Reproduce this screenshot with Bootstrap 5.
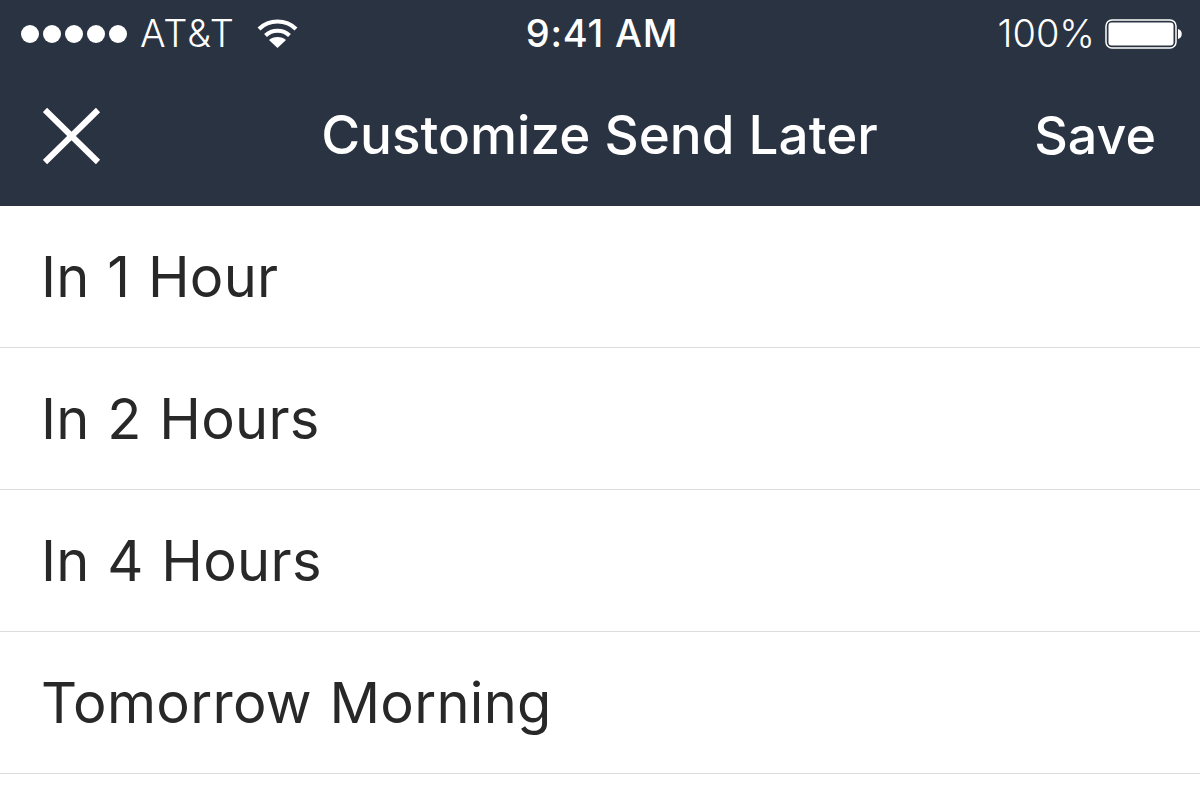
<!doctype html>
<html lang="en"><head><meta charset="utf-8">
<link href="https://cdn.jsdelivr.net/npm/bootstrap@5.3.0/dist/css/bootstrap.min.css" rel="stylesheet">
<style>
html,body{margin:0;height:800px;overflow:hidden;background:#fff}
.phone-top{background:#2a3342;color:#fff;height:206px;font-family:Inter,sans-serif}
.status-bar{height:67px;padding:0 17px 0 21px;font-family:Inter,sans-serif;font-weight:300;font-size:38px}
.status-side{width:320px}
.carrier-text{letter-spacing:1px;margin-left:13px}
.clock-text{font-weight:500;font-size:38px;letter-spacing:.8px}
.signal-dot{width:18px;height:18px;border-radius:50%;background:#fff;display:block}
.signal-row{gap:4px}
.wifi-icon{margin-left:22px}
.battery-icon{margin-left:10px}
.title-bar{height:139px;padding:0 44px 2px 43px}
.title-text{font-weight:500;font-size:53px;white-space:nowrap}
.save-text{font-weight:500;font-size:52px}
.title-side{width:240px}
.send-row{height:142px;padding:0 41px;border-bottom:1px solid #dcdcdc;font-family:Inter,sans-serif;font-weight:400;font-size:56px;letter-spacing:.3px;word-spacing:1.5px;color:#282828}
</style></head><body>
<div class="phone-top">
<div class="status-bar d-flex align-items-center justify-content-between">
<div class="status-side d-flex align-items-center">
<span class="d-flex signal-row"><i class="signal-dot"></i><i class="signal-dot"></i><i class="signal-dot"></i><i class="signal-dot"></i><i class="signal-dot"></i></span>
<span class="carrier-text">AT&amp;T</span>
<svg class="wifi-icon" width="41" height="29" viewBox="0 0 41 29" fill="none" stroke="#fff" stroke-width="4"><path d="M2 10C12 0 29 0 39 10M8.500 16.500C15 10 26 10 32.500 16.500"/><path d="M20.500 29L12 21C16 17 25 17 29 21Z" fill="#fff" stroke="none"/></svg>
</div>
<div class="clock-text">9:41 AM</div>
<div class="status-side d-flex align-items-center justify-content-end">
<span>100%</span>
<svg class="battery-icon" width="78" height="30" viewBox="0 0 78 30"><rect x="1" y="1" width="70" height="28" rx="6" fill="none" stroke="#fff" stroke-width="1.500"/><rect x="3.500" y="3.500" width="65" height="23" rx="3" fill="#fff"/><path d="M73 10c5 1 5 9 0 10z" fill="#fff"/></svg>
</div>
</div>
<div class="title-bar d-flex align-items-center justify-content-between">
<div class="title-side"><svg class="d-block" width="58" height="58" viewBox="0 0 58 58" stroke="#fff" stroke-width="6"><path d="M2 3L55 55M55 3L2 55"/></svg></div>
<div class="title-text">Customize Send Later</div>
<div class="title-side text-end save-text">Save</div>
</div>
</div>
<div class="send-row d-flex align-items-center">In 1 Hour</div>
<div class="send-row d-flex align-items-center">In 2 Hours</div>
<div class="send-row d-flex align-items-center">In 4 Hours</div>
<div class="send-row d-flex align-items-center">Tomorrow Morning</div>
</body></html>
